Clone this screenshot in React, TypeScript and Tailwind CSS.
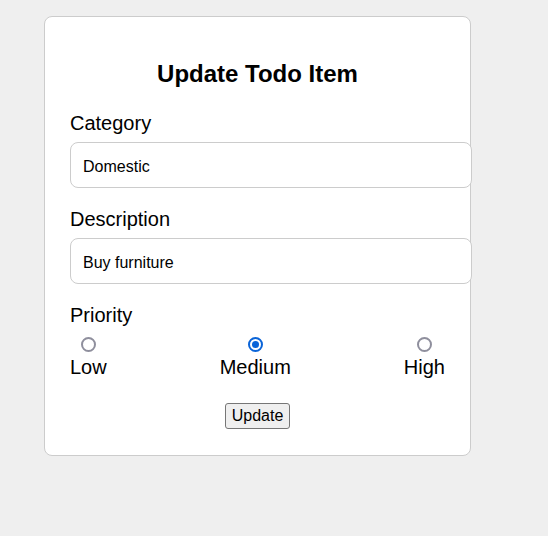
import React from "react";

function Radio({ label, checked }: { label: string; checked?: boolean }) {
  return (
    <label className="flex flex-col items-center">
      <span
        className={
          checked
            ? "mt-[10px] flex h-[15px] w-[15px] items-center justify-center rounded-full border-2 border-[#0a64d8] bg-white"
            : "mt-[10px] h-[15px] w-[15px] rounded-full border-2 border-[#8f8f9d] bg-white"
        }
      >
        {checked && <span className="h-[7px] w-[7px] rounded-full bg-[#0a64d8]" />}
      </span>
      <span className="mt-[4px] text-[20px] leading-[23px] text-black">{label}</span>
    </label>
  );
}

export default function App() {
  return (
    <div
      className="min-h-[536px] w-full bg-[#efefef] pt-4"
      style={{ fontFamily: '"Liberation Sans", Arial, sans-serif' }}
    >
      <div className="ml-[44px] w-[427px] rounded-lg border border-[#cccccc] bg-white px-[25px] pb-[26px] pt-[43px]">
        <h2 className="text-center text-[24px] font-bold leading-[28px] text-black">Update Todo Item</h2>

        <div className="mt-6 text-[20px] leading-[23px] text-black">Category</div>
        <div className="mt-[7px] flex h-[46px] w-[402px] items-center rounded-lg border border-[#cccccc] bg-white pl-3 pt-[4px] text-[16px] text-black">
          Domestic
        </div>

        <div className="mt-5 text-[20px] leading-[23px] text-black">Description</div>
        <div className="mt-[7px] flex h-[46px] w-[402px] items-center rounded-lg border border-[#cccccc] bg-white pl-3 pt-[4px] text-[16px] text-black">
          Buy furniture
        </div>

        <div className="mt-5 text-[20px] leading-[23px] text-black">Priority</div>
        <div className="flex justify-between">
          <Radio label="Low" />
          <Radio label="Medium" checked />
          <Radio label="High" />
        </div>

        <div className="mt-[24px] flex justify-center">
          <button className="h-[26px] rounded-[3px] border border-[#767676] bg-[#efefef] px-[6px] text-[16px] leading-[18px] text-black">
            Update
          </button>
        </div>
      </div>
    </div>
  );
}
